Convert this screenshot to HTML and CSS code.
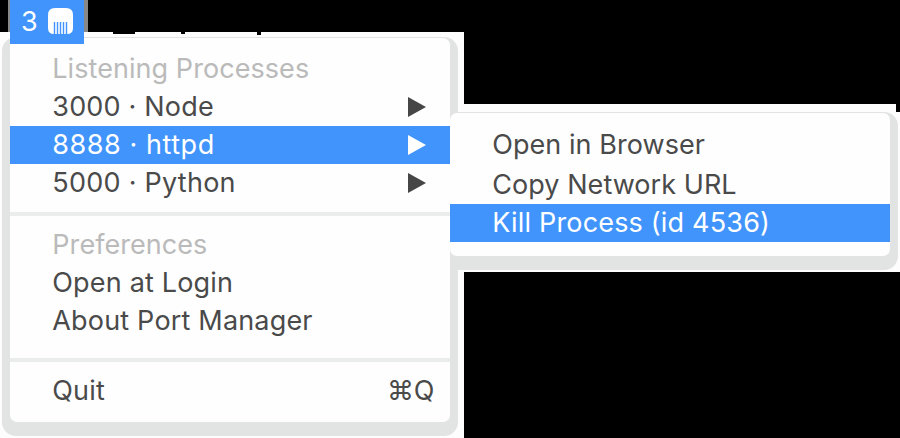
FILE: index.html
```html
<!DOCTYPE html>
<html lang="en">
<head>
<meta charset="utf-8">
<title>Port Manager</title>
<link rel="stylesheet" href="styles.css">
</head>
<body>
<main class="desktop">
  <div class="backing backing-main"></div>
  <div class="backing backing-sub"></div>
  <div class="backing backing-edge"></div>
  <i class="speck speck-a"></i><i class="speck speck-b"></i><i class="speck speck-c"></i>

  <div class="shadow shadow-main">
    <nav class="menu menu-main">
      <div class="row heading"><span>Listening Processes</span></div>
      <div class="row"><span>3000 · Node</span><svg class="arrow" viewBox="0 0 18 20"><path d="M0 0 18 10 0 20z"/></svg></div>
      <div class="row active"><span class="wide">8888 · httpd</span><svg class="arrow" viewBox="0 0 18 20"><path d="M0 0 18 10 0 20z"/></svg></div>
      <div class="row"><span class="roomy">5000 · Python</span><svg class="arrow" viewBox="0 0 18 20"><path d="M0 0 18 10 0 20z"/></svg></div>
      <hr class="rule">
      <div class="row heading"><span>Preferences</span></div>
      <div class="row"><span>Open at Login</span></div>
      <div class="row"><span>About Port Manager</span></div>
      <hr class="rule rule-last">
      <div class="row"><span>Quit</span><span class="shortcut">⌘Q</span></div>
    </nav>
  </div>

  <div class="shadow shadow-sub">
    <nav class="menu menu-sub">
      <div class="row first"><span class="tight">Open in Browser</span></div>
      <div class="row"><span class="tight">Copy Network URL</span></div>
      <div class="row active"><span>Kill Process (id 4536)</span></div>
    </nav>
  </div>

  <i class="bar-edge"></i>
  <div class="status">
    <span>3</span>
    <svg class="port" viewBox="0 0 25 27"><path fill="#fff" d="M7 0H18Q25 0 25 7V20Q25 26 19 26H6Q0 26 0 20V7Q0 0 7 0Z"/><path stroke="#4094fc" stroke-width="1.4" d="M6.5 14V27M9.5 14V27M12.5 14V27M15.5 14V27M18.5 14V27"/></svg>
  </div>
</main>
</body>
</html>
```

FILE: styles.css
```css
* { box-sizing: border-box; }
body { margin: 0; background: #000; font-family: Inter, "Liberation Sans", sans-serif; font-size: 27px; font-weight: 400; color: #4a4a4a; }
.desktop { position: relative; width: 900px; height: 438px; overflow: hidden; background: #000; }

.backing { position: absolute; background: #fdfdfd; }
.backing-main { left: 0; top: 32px; width: 464px; height: 406px; }
.backing-sub { left: 464px; top: 104px; width: 432px; height: 168px; }
.backing-edge { left: 896px; top: 112px; width: 4px; height: 160px; }

.speck { position: absolute; top: 32px; height: 2px; background: #000; }
.speck-a { left: 113px; width: 22px; }
.speck-b { left: 181px; width: 4px; }
.speck-c { left: 257px; width: 4px; height: 3px; }

.shadow { position: absolute; background: #e2e4e3; border-radius: 14px; }
.shadow-main { left: 2px; top: 37px; width: 456px; height: 399px; padding: 1px 8px 14px; }
.shadow-sub { left: 450px; top: 112px; width: 448px; height: 158px; padding: 1px 8px 14px 0; border-radius: 8px 14px 14px 0; }

.menu { height: 100%; background: #fefefe; border-radius: 7px; overflow: hidden; }
.menu-main { padding-top: 12px; }
.menu-sub { padding-top: 13px; }

.row { display: flex; align-items: center; justify-content: space-between; height: 38px; padding: 0 16px 0 42.3px; line-height: 38px; letter-spacing: .18px; white-space: pre; }
.row .wide { letter-spacing: .55px; }
.row .roomy { letter-spacing: .25px; }
.row .tight { letter-spacing: .05px; }
.heading { color: #bababa; letter-spacing: .06px; }
.active { background: #4094fc; color: #fff; }
.first { margin-bottom: 2px; }
.arrow { width: 18px; height: 20px; margin-right: 8px; fill: #464646; }
.active .arrow { fill: #fff; }
.rule { height: 4px; margin: 10px 0; border: 0; background: #ebecec; }
.rule-last { margin-top: 18px; }
.row .shortcut { letter-spacing: -.3px; }

.bar-edge { position: absolute; left: 8px; top: 0; width: 80px; height: 32px; background: #888; }
.status { position: absolute; left: 10px; top: 0; display: flex; align-items: center; gap: 10px; width: 74px; height: 44px; padding: 0 0 1px 11px; background: #4094fc; color: #fff; line-height: 42px; }
.port { width: 25px; height: 27px; }
```
